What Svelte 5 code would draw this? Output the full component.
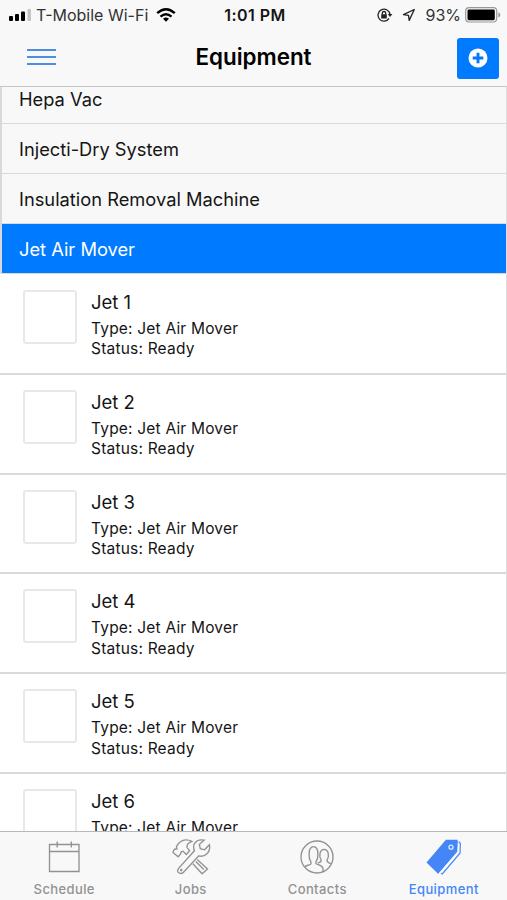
<script lang="ts">
	interface Equipment {
		name: string;
		type: string;
		status: string;
	}

	const categories = ['Hepa Vac', 'Injecti-Dry System', 'Insulation Removal Machine', 'Jet Air Mover'];
	const tabs = ['Schedule', 'Jobs', 'Contacts', 'Equipment'];

	let selected = $state('Jet Air Mover');
	let activeTab = $state('Equipment');

	let items: Equipment[] = $derived(
		[1, 2, 3, 4, 5, 6].map((n) => ({ name: `Jet ${n}`, type: selected, status: 'Ready' }))
	);
</script>

<div class="screen">
	<div class="status-bar">
		<div class="carrier">
			<svg width="23" height="12" viewBox="0 0 23 12">
				<rect x="0" y="7" width="4" height="5" rx="1" />
				<rect x="6" y="5" width="4" height="7" rx="1" />
				<rect x="12" y="2.5" width="4" height="9.5" rx="1" />
				<rect x="18.5" y="0" width="3.5" height="12" rx="1" fill="#c4c4c4" />
			</svg>
			<span class="network">T-Mobile Wi-Fi</span>
			<svg class="wifi" width="20" height="14" viewBox="0 0 20 14" fill="none" stroke="#000" stroke-width="2.4">
				<path d="M1.2 5.2Q10-2.6 18.8 5.2" />
				<path d="M4.5 8.7Q10 3.8 15.5 8.7" />
				<path d="M7 10.7Q10 8.2 13 10.7L10 13.8Z" fill="#000" stroke="none" />
			</svg>
		</div>
		<span class="time">1:01 PM</span>
		<div class="indicators">
			<svg width="16" height="14" viewBox="0 0 16 14" fill="none" stroke="#222" stroke-width="1.3">
				<path d="M12.1 10.4A6 6 0 1 1 13 6.5" />
				<path d="M10.8 6.1h4.6L13 9Z" fill="#222" stroke="none" />
				<rect x="4.2" y="6.3" width="5.6" height="4.2" rx=".5" fill="#222" stroke="none" />
				<path d="M5.3 6.5V5.2a1.7 1.7 0 0 1 3.4 0v1.3" />
			</svg>
			<svg class="location" width="14" height="14" viewBox="0 0 14 14" fill="none" stroke="#222" stroke-width="1.3" stroke-linejoin="round">
				<path d="M12.3 1.5 1.5 6.6l5 .8.7 5Z" />
			</svg>
			<span class="percent">93%</span>
			<svg class="battery" width="36" height="16" viewBox="0 0 36 16">
				<rect x=".7" y=".7" width="31" height="14.3" rx="3.4" fill="none" stroke="#999" stroke-width="1.2" />
				<rect x="2.5" y="2.5" width="27.3" height="10.7" rx="1.4" />
				<path d="M33.3 5.2q2 .6 2 2.7t-2 2.7Z" fill="#999" />
			</svg>
		</div>
	</div>

	<header>
		<button type="button" class="menu" aria-label="Menu">
			<i></i><i></i><i></i>
		</button>
		<h1>Equipment</h1>
		<button type="button" class="add" aria-label="Add equipment">
			<svg width="20" height="20" viewBox="0 0 20 20">
				<circle cx="10" cy="10" r="9.5" fill="#fff" />
				<path d="M10 4.7v10.6M4.7 10h10.6" stroke="#007aff" stroke-width="2.9" />
			</svg>
		</button>
	</header>

	<main>
		<div class="categories">
			{#each categories as category (category)}
				<button
					type="button"
					class="category"
					class:selected={category === selected}
					onclick={() => (selected = category)}
				>
					{category}
				</button>
			{/each}
		</div>
		{#each items as item (item.name)}
			<div class="item">
				<div class="thumb"></div>
				<div class="details">
					<h2>{item.name}</h2>
					<p>Type: {item.type}</p>
					<p>Status: {item.status}</p>
				</div>
			</div>
		{/each}
	</main>

	<nav>
		{#each tabs as tab (tab)}
			<button type="button" class="tab" class:active={tab === activeTab} onclick={() => (activeTab = tab)}>
				<svg width="40" height="38" viewBox="0 0 40 38" fill="none" stroke="currentColor" stroke-width="1.35">
					{#if tab === 'Schedule'}
						<path d="M5.5 6.5h29.5v27H5.5ZM5.5 13.5H35" />
						<path d="M13.2 3.5v6M27.3 3.5v6" />
					{:else if tab === 'Jobs'}
						<path d="M2 14.5 7.2 18.7 9.6 16 10.2 13.8 12 13.2 15.4 16.5 18.6 12.8 16.2 9.8Q15 5.8 20.8 3.3Q13-.5 7.3 5.7L5.4 8.6 6 10.8Q3 10.3 2 14.5Z" />
						<path d="M7.6 30.4Q5.3 33.7 8.2 35Q11 36.5 13.2 33.5L27.8 17.8Q32.5 19.4 36.5 15.3Q39.5 12 38.4 6.7L33.6 11.8 29.3 10.7 28.3 6.5 33.1 2.2Q27 .9 24.3 4.5Q21.4 7.4 23.4 12.8Z" />
						<path d="m26.2 21.5 10.3 9.6-5.4 4.6-9.2-9.9M24.8 23.5l8 8" />
						<circle cx="10.2" cy="32.1" r=".6" />
					{:else if tab === 'Contacts'}
						<circle cx="20" cy="19" r="16" />
						<path d="M7.8 28.8C9.5 26.7 15.7 27.5 13.8 23.8C12.2 21.5 12 20 12.1 16.8C11.2 5.9 21.8 5.9 20.9 16.8C21 20 20.5 21.5 19 23.8C17.5 27.5 24.6 25.7 26 30.4Q26.2 32 25.7 33.7" />
						<path d="M20.9 25.2C22.1 23.9 24.8 24.5 24.1 21.8C21.7 18.5 22.6 11.4 27.1 11.3C31.8 11.4 32.4 18.5 30.1 21.8C29.4 24.5 32.8 24.5 34 26.1" />
					{:else}
						<path d="M21.9 1.7 33.4 1.7 34.1 5.1 33.6 13.6 14.3 36.1 2.5 24.4Z" fill="currentColor" stroke="none" />
						<path d="M34.3 4.3 33.9 14 14.7 36" stroke="#f8f8f8" stroke-width="1.1" />
						<path d="M34.6 3.6 36.4 5.5 36 15.2 18.3 36 17 35.2" stroke-width="1.2" />
						<circle cx="27" cy="9.2" r="2" stroke="#dceaff" stroke-width="1.3" />
					{/if}
				</svg>
				<span>{tab}</span>
			</button>
		{/each}
	</nav>
</div>

<style>
	:global(body) {
		margin: 0;
	}

	.screen {
		display: flex;
		flex-direction: column;
		height: 900px;
		overflow: hidden;
		background: #fff;
		color: #151515;
		font-family: Inter, 'Liberation Sans', sans-serif;
	}

	button {
		padding: 0;
		border: none;
		background: none;
		font: inherit;
		color: inherit;
		cursor: pointer;
	}

	svg {
		display: block;
		flex-shrink: 0;
	}

	.status-bar {
		display: grid;
		grid-template-columns: 1fr auto 1fr;
		align-items: center;
		box-sizing: border-box;
		height: 30px;
		padding: 0 6px 0 9px;
		background: #f8f8f8;
		font-size: 16px;
	}

	.carrier,
	.indicators {
		display: flex;
		align-items: center;
	}

	.indicators {
		justify-content: flex-end;
	}

	.network {
		margin: 0 8px 0 4px;
		color: #333;
		white-space: nowrap;
	}

	.time {
		font-weight: 600;
		letter-spacing: 0.45px;
	}

	.location {
		margin: 0 9px 0 9px;
	}

	.percent {
		color: #333;
	}

	.battery {
		margin-left: 4px;
	}

	header {
		display: grid;
		grid-template-columns: 1fr auto 1fr;
		align-items: center;
		box-sizing: border-box;
		height: 57px;
		padding: 0 8px 0 27px;
		border-bottom: 1px solid #c6c6c8;
		background: #f8f8f8;
	}

	.menu {
		display: flex;
		flex-direction: column;
		gap: 5px;
		width: 29px;
		margin-bottom: 2px;
	}

	.menu i {
		height: 2px;
		background: #4f8edc;
	}

	h1 {
		margin: 0 19px 4px 0;
		font-size: 22.4px;
		font-weight: 600;
		color: #000;
	}

	.add {
		display: grid;
		place-items: center;
		justify-self: end;
		width: 42px;
		height: 41px;
		border-radius: 3px;
		background: #007aff;
	}

	main {
		flex: 1;
		min-height: 0;
		overflow: hidden;
		border-right: 1px solid #ddd;
	}

	.categories {
		margin: -13px 0 1px;
		border-left: 2px solid #d9d9dc;
	}

	.category {
		display: block;
		box-sizing: border-box;
		width: 100%;
		height: 50px;
		padding-left: 17px;
		border-bottom: 1px solid #d9d9dc;
		background: #f8f8f8;
		font-size: 18.3px;
		text-align: left;
	}

	.category.selected {
		background: #007aff;
		color: #fff;
	}

	.item {
		display: flex;
		gap: 14px;
		box-sizing: border-box;
		height: 99.8px;
		padding: 15px 23px 0;
		border-bottom: 2px solid #d9d9dc;
	}

	.thumb {
		box-sizing: border-box;
		width: 54px;
		height: 54px;
		border: 2px solid #e8e8e8;
		border-radius: 3px;
	}

	h2 {
		margin: 0 0 4px;
		font-size: 18.5px;
		font-weight: 400;
		line-height: 25px;
	}

	p {
		margin: 0;
		font-size: 15.5px;
		letter-spacing: 0.2px;
		line-height: 20.4px;
	}

	nav {
		display: grid;
		grid-template-columns: repeat(4, 1fr);
		box-sizing: border-box;
		height: 69px;
		padding-left: 1px;
		border-top: 1px solid #b8b8bb;
		background: #f8f8f8;
	}

	.tab {
		display: flex;
		flex-direction: column;
		align-items: center;
		padding-top: 6px;
		font-size: 13px;
		font-weight: 500;
		letter-spacing: 0.4px;
		color: #929292;
	}

	.tab span {
		margin-top: 5px;
		line-height: 16px;
	}

	.tab.active {
		color: #4486f7;
	}
</style>
